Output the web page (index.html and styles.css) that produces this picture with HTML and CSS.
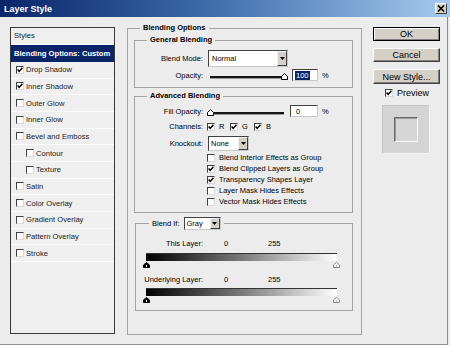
FILE: index.html
```html
<!DOCTYPE html>
<html>
<head>
<meta charset="utf-8">
<title>Layer Style</title>
<link rel="stylesheet" href="styles.css">
</head>
<body>
<div class="window">
  <div class="titlebar">
    <span class="title">Layer Style</span>
    <span class="close"><svg width="8" height="7" viewBox="0 0 8 7"><path d="M1 0.5 L7 6.5 M7 0.5 L1 6.5" stroke="#000" stroke-width="1.6"/></svg></span>
  </div>
  <div class="body">
    <div class="styles-panel">
      <div class="sp-head">Styles</div>
      <div class="sp-item selected">Blending Options: Custom</div>
      <div class="sp-item"><span class="cb checked"><svg viewBox="0 0 6 6"><path d="M0.6 2.6 L2.2 4.4 L5.4 0.8" /></svg></span>Drop Shadow</div>
      <div class="sp-item"><span class="cb checked"><svg viewBox="0 0 6 6"><path d="M0.6 2.6 L2.2 4.4 L5.4 0.8" /></svg></span>Inner Shadow</div>
      <div class="sp-item"><span class="cb"></span>Outer Glow</div>
      <div class="sp-item"><span class="cb"></span>Inner Glow</div>
      <div class="sp-item"><span class="cb"></span>Bevel and Emboss</div>
      <div class="sp-item indent"><span class="cb"></span>Contour</div>
      <div class="sp-item indent"><span class="cb"></span>Texture</div>
      <div class="sp-item"><span class="cb"></span>Satin</div>
      <div class="sp-item"><span class="cb"></span>Color Overlay</div>
      <div class="sp-item"><span class="cb"></span>Gradient Overlay</div>
      <div class="sp-item"><span class="cb"></span>Pattern Overlay</div>
      <div class="sp-item"><span class="cb"></span>Stroke</div>
    </div>

    <fieldset class="grp main-grp">
      <legend class="lg lg-main">Blending Options</legend>

      <fieldset class="grp sub-grp general">
        <legend class="lg lg-sub">General Blending</legend>
        <div class="frow r-mode">
          <span class="lbl">Blend Mode:</span>
          <div class="select sel-mode"><span class="sel-text">Normal</span><span class="drop"><svg width="5" height="3" viewBox="0 0 5 3"><polygon points="0,0 5,0 2.5,3" fill="#000"/></svg></span></div>
        </div>
        <div class="frow r-opacity">
          <span class="lbl">Opacity:</span>
          <div class="slider s-opacity"><span class="track"></span><span class="thumb t-end"><svg width="7" height="7" viewBox="0 0 7 7"><polygon points="0.5,6.5 0.5,3.5 3.5,0.5 6.5,3.5 6.5,6.5" fill="#fff" stroke="#000"/></svg></span></div>
          <div class="num n-opacity"><span class="hl">100</span></div>
          <span class="pct">%</span>
        </div>
      </fieldset>

      <fieldset class="grp sub-grp advanced">
        <legend class="lg lg-sub">Advanced Blending</legend>
        <div class="frow r-fill">
          <span class="lbl">Fill Opacity:</span>
          <div class="slider s-fill"><span class="track"></span><span class="thumb t-start"><svg width="7" height="7" viewBox="0 0 7 7"><polygon points="0.5,6.5 0.5,3.5 3.5,0.5 6.5,3.5 6.5,6.5" fill="#fff" stroke="#000"/></svg></span></div>
          <div class="num n-fill"><span>0</span></div>
          <span class="pct">%</span>
        </div>
        <div class="frow r-channels">
          <span class="lbl lbl-cb">Channels:</span>
          <span class="cb checked"><svg viewBox="0 0 6 6"><path d="M0.6 2.6 L2.2 4.4 L5.4 0.8" /></svg></span><span class="ch ch-r">R</span>
          <span class="cb checked"><svg viewBox="0 0 6 6"><path d="M0.6 2.6 L2.2 4.4 L5.4 0.8" /></svg></span><span class="ch ch-g">G</span>
          <span class="cb checked"><svg viewBox="0 0 6 6"><path d="M0.6 2.6 L2.2 4.4 L5.4 0.8" /></svg></span><span class="ch">B</span>
        </div>
        <div class="frow r-knockout">
          <span class="lbl">Knockout:</span>
          <div class="select sel-knock"><span class="sel-text">None</span><span class="drop"><svg width="5" height="3" viewBox="0 0 5 3"><polygon points="0,0 5,0 2.5,3" fill="#000"/></svg></span></div>
        </div>
        <div class="opts">
          <div class="opt"><span class="cb"></span>Blend Interior Effects as Group</div>
          <div class="opt"><span class="cb checked"><svg viewBox="0 0 6 6"><path d="M0.6 2.6 L2.2 4.4 L5.4 0.8" /></svg></span>Blend Clipped Layers as Group</div>
          <div class="opt"><span class="cb checked"><svg viewBox="0 0 6 6"><path d="M0.6 2.6 L2.2 4.4 L5.4 0.8" /></svg></span>Transparency Shapes Layer</div>
          <div class="opt"><span class="cb"></span>Layer Mask Hides Effects</div>
          <div class="opt"><span class="cb"></span>Vector Mask Hides Effects</div>
        </div>
      </fieldset>

      <fieldset class="grp sub-grp blendif">
        <legend class="lg lg-blendif"><span class="bi-label">Blend If:</span><div class="select sel-gray"><span class="sel-text">Gray</span><span class="drop"><svg width="5" height="3" viewBox="0 0 5 3"><polygon points="0,0 5,0 2.5,3" fill="#000"/></svg></span></div></legend>
        <div class="brow first"><span class="lbl">This Layer:</span><span class="v0">0</span><span>255</span></div>
        <div class="gradbar"></div>
        <div class="gthumbs">
          <svg width="7" height="6" viewBox="0 0 7 6"><polygon points="0.5,5.5 0.5,3 3.5,0.5 6.5,3 6.5,5.5" fill="#000" stroke="#000"/><rect x="3" y="3" width="1" height="2" fill="#fff"/></svg>
          <svg width="7" height="6" viewBox="0 0 7 6"><polygon points="0.5,5.5 0.5,3 3.5,0.5 6.5,3 6.5,5.5" fill="#fff" stroke="#8a8a8a"/><rect x="3" y="3" width="1" height="2" fill="#bbb"/></svg>
        </div>
        <div class="brow second"><span class="lbl">Underlying Layer:</span><span class="v0">0</span><span>255</span></div>
        <div class="gradbar"></div>
        <div class="gthumbs">
          <svg width="7" height="6" viewBox="0 0 7 6"><polygon points="0.5,5.5 0.5,3 3.5,0.5 6.5,3 6.5,5.5" fill="#000" stroke="#000"/><rect x="3" y="3" width="1" height="2" fill="#fff"/></svg>
          <svg width="7" height="6" viewBox="0 0 7 6"><polygon points="0.5,5.5 0.5,3 3.5,0.5 6.5,3 6.5,5.5" fill="#fff" stroke="#8a8a8a"/><rect x="3" y="3" width="1" height="2" fill="#bbb"/></svg>
        </div>
      </fieldset>
    </fieldset>

    <div class="side">
      <div class="btn default">OK</div>
      <div class="btn">Cancel</div>
      <div class="btn">New Style...</div>
      <div class="preview-row"><span class="cb checked"><svg viewBox="0 0 6 6"><path d="M0.6 2.6 L2.2 4.4 L5.4 0.8" /></svg></span>Preview</div>
      <div class="preview-box"><div class="preview-inner"></div></div>
    </div>
  </div>
</div>
</body>
</html>
```

FILE: styles.css
```css
* { box-sizing: border-box; }
html, body { margin: 0; padding: 0; }
body {
  width: 450px;
  height: 345px;
  overflow: hidden;
  background: #ececec;
  font-family: "Liberation Sans", Arial, sans-serif;
  font-size: 7.5px;
  color: #000;
}
.window {
  width: 450px;
  height: 345px;
  display: flex;
  flex-direction: column;
  background: #ececec;
}
.titlebar {
  height: 17px;
  flex: none;
  background: linear-gradient(to right, #0a246a 0%, #3a6aa8 45%, #a6caf0 100%);
  display: flex;
  align-items: center;
  justify-content: space-between;
  padding: 0 3px 0 4px;
}
.title {
  color: #fff;
  font-weight: bold;
  font-size: 9px;
}
.close {
  width: 12px;
  height: 11px;
  background: #d4d0c8;
  border: 1px solid;
  border-color: #fff #404040 #404040 #fff;
  display: flex;
  align-items: center;
  justify-content: center;
}
.body {
  flex: 1;
  display: flex;
  align-items: flex-start;
  padding: 6px 0 0 10px;
  border-right: 1px solid #8e8e8e;
  border-bottom: 1px solid #8e8e8e;
  margin-right: 2px;
}

/* checkboxes */
.cb {
  flex: none;
  display: inline-flex;
  width: 8px;
  height: 8px;
  background: #fff;
  border: 1px solid;
  border-color: #404040 #d8d8d8 #d8d8d8 #404040;
  align-items: center;
  justify-content: center;
}
.cb svg { width: 6px; height: 6px; }
.cb svg path { fill: none; stroke: #000; stroke-width: 1.5; }

/* styles list */
.styles-panel {
  flex: none;
  margin-top: 4px;
  width: 105px;
  height: 307px;
  border: 1px solid #3a3a3a;
  background: #efefef;
  font-size: 7.6px;
  color: #1a1a1a;
}
.sp-head {
  height: 17px;
  line-height: 16px;
  padding-left: 3px;
  border-bottom: 1px solid #fafafa;
}
.sp-item {
  height: 16.667px;
  display: flex;
  align-items: center;
  padding-left: 5px;
  border-bottom: 1px solid #fbfbfb;
}
.sp-item .cb { margin-right: 2px; }
.sp-item.indent { padding-left: 15px; }
.sp-item.selected {
  height: 17px;
  background: #0a246a;
  color: #fff;
  font-weight: bold;
  padding-left: 3px;
  border-bottom: none;
}

/* group boxes */
.grp {
  margin: 0;
  border: 1px solid #a4a4a4;
  min-width: 0;
}
.lg {
  padding: 0 3px;
  line-height: 10px;
  font-weight: bold;
}
.main-grp {
  flex: none;
  width: 235px;
  height: 312px;
  margin-left: 12px;
  padding: 0 8px 0 6px;
}
.lg-main { margin-left: 6px; }
.sub-grp {
  padding: 0;
  width: 219px;
}
.lg-sub { margin-left: 12px; }
.general { margin-top: 2px; height: 53px; }
.advanced { margin-top: 3px; height: 122px; }
.blendif { margin-top: 4px; height: 94px; margin-left: 1px; width: 218px; }

.frow {
  display: flex;
  align-items: center;
}
.lbl {
  flex: none;
  width: 68px;
  text-align: right;
  margin-right: 5px;
}
.lbl-cb { margin-right: 4px; }

/* selects */
.select {
  display: flex;
  align-items: stretch;
  background: #fff;
  border: 1px solid;
  border-color: #404040 #c8c8c8 #c8c8c8 #404040;
}
.sel-text {
  flex: 1;
  display: flex;
  align-items: center;
  padding-left: 2px;
}
.drop {
  flex: none;
  width: 10px;
  background: #d4d0c8;
  border: 1px solid;
  border-color: #f4f4f4 #404040 #404040 #f4f4f4;
  display: flex;
  align-items: center;
  justify-content: center;
}
.r-mode { margin-top: 5px; }
.sel-mode { width: 80px; height: 17px; }
.sel-mode .sel-text { padding-left: 3px; }

/* sliders */
.slider {
  position: relative;
  flex: none;
  height: 12px;
  display: flex;
  align-items: center;
}
.track {
  flex: 1;
  height: 2px;
  margin-top: 3px;
  background: #151515;
  box-shadow: 0 1px 0 #9a9a9a;
}
.thumb {
  position: absolute;
  top: 4px;
  display: flex;
}
.s-opacity { width: 81px; }
.s-opacity .track { margin-left: 2px; margin-right: 4px; }
.t-end { right: 1px; }
.s-fill { width: 80px; }
.s-fill .track { margin-left: 5px; margin-right: 4px; }
.t-start { left: -1px; }

.num {
  flex: none;
  height: 12px;
  background: #fff;
  border: 1px solid;
  border-color: #404040 #c8c8c8 #c8c8c8 #404040;
  display: flex;
  align-items: center;
  padding-left: 2px;
}
.n-opacity { width: 26px; margin-left: 3px; }
.hl {
  background: #0a246a;
  color: #fff;
  line-height: 9px;
  padding: 0 1px;
}
.n-fill { width: 28px; margin-left: 2px; padding-left: 5px; }
.pct { margin-left: 4px; }
.r-opacity { margin-top: 2px; }

.r-fill { margin-top: 4px; }
.r-channels { margin-top: 4px; height: 11px; }
.ch { margin-left: 4px; width: 11px; }
.ch-g { width: 12px; }
.r-knockout { margin-top: 4px; }
.sel-knock { width: 41px; height: 15px; }

.opts { margin-top: 1px; padding-left: 72px; }
.opt {
  height: 11px;
  display: flex;
  align-items: center;
}
.opt .cb { margin-right: 4px; }

/* blend if */
.lg-blendif {
  font-weight: normal;
  margin-left: 13px;
  display: flex;
  align-items: center;
  line-height: 13px;
}
.bi-label { margin-right: 4px; }
.sel-gray { width: 37px; height: 13px; }
.brow {
  display: flex;
  height: 10px;
  align-items: center;
}
.brow .lbl { width: 67px; margin-right: 21px; }
.brow .v0 { width: 44px; }
.brow.first { margin-top: 8px; }
.brow.second { margin-top: 6px; }
.gradbar {
  margin: 5px 0 0 10px;
  width: 191px;
  height: 8px;
  background: linear-gradient(to right, #000 0%, #7a7a7a 50%, #fff 100%);
  border-top: 1px solid #333;
}
.brow.second + .gradbar { margin-top: 4px; }
.gthumbs {
  margin: 1px 0 0 7px;
  width: 197px;
  display: flex;
  justify-content: space-between;
}
.gthumbs svg { display: block; }

/* side buttons */
.side {
  flex: none;
  width: 67px;
  margin-left: 11px;
  margin-top: 4px;
  font-size: 9px;
}
.btn {
  height: 14px;
  margin-bottom: 7px;
  background: #d4d0c8;
  border: 1px solid;
  border-color: #fff #404040 #404040 #fff;
  box-shadow: inset -1px -1px 0 #808080;
  display: flex;
  align-items: center;
  justify-content: center;
}
.btn.default {
  border-color: #000;
  box-shadow: inset 1px 1px 0 #fff, inset -1px -1px 0 #808080;
}
.btn:nth-child(3) { height: 15px; margin-bottom: 5px; }
.preview-row {
  display: flex;
  align-items: center;
  padding-left: 12px;
  height: 8px;
}
.preview-row .cb { margin-right: 4px; }
.preview-box {
  margin: 8px 0 0 9px;
  width: 48px;
  height: 49px;
  background: #d4d4d4;
  border: 1px solid;
  border-color: #c4c4c4 #f2f2f2 #f2f2f2 #c4c4c4;
  display: flex;
  align-items: center;
  justify-content: center;
}
.preview-inner {
  width: 24px;
  height: 25px;
  background: #d6d6d6;
  border: 1px solid;
  border-color: #6a6a6a #fafafa #fafafa #6a6a6a;
  box-shadow: inset 1px 1px 0 #9a9a9a;
}
```
